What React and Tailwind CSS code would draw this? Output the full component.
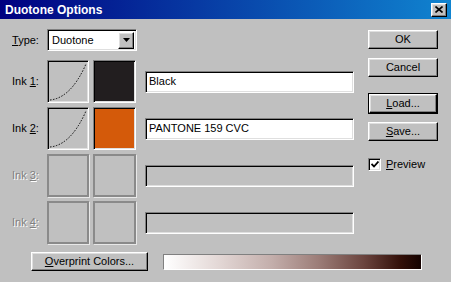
import React from 'react';

const raised =
  "bg-[#c0c0c0] border border-t-white border-l-white border-r-black border-b-black shadow-[inset_-1px_-1px_0_#808080,inset_1px_1px_0_#dfdfdf]";
const sunken =
  "border border-t-[#808080] border-l-[#808080] border-r-white border-b-white shadow-[inset_1px_1px_0_#000,inset_-1px_-1px_0_#dfdfdf]";

function U({ children }) {
  return <span className="underline underline-offset-[1px]">{children}</span>;
}

function Curve() {
  return (
    <svg width="38" height="39" viewBox="0 0 38 39" className="block">
      <path d="M1 38 Q 22 36 37 2" fill="none" stroke="#000" strokeWidth="1" strokeDasharray="1.5 1.5" />
    </svg>
  );
}

function InkRow({ n, color, name, enabled }) {
  return (
    <div className="flex items-center h-[43px]">
      <div
        className={`w-[35px] ${enabled ? "text-black" : "text-[#808080] [text-shadow:1px_1px_0_#fff]"}`}
      >
        Ink <U>{n}</U>:
      </div>
      {enabled ? (
        <>
          <div className={`w-[42px] h-[43px] ${sunken} bg-[#c0c0c0] flex items-center justify-center`}>
            <Curve />
          </div>
          <div className={`w-[43px] h-[43px] ml-[4px] ${sunken}`} style={{ background: color }} />
          <div className={`ml-[9px] w-[209px] h-[22px] ${sunken} bg-white flex items-center pl-[3px]`}>
            {name}
          </div>
        </>
      ) : (
        <>
          <div className="w-[42px] h-[43px] border-2 border-[#8a8a8a] shadow-[1px_1px_0_#e8e8e8]" />
          <div className="w-[43px] h-[43px] ml-[4px] border-2 border-[#8a8a8a] shadow-[1px_1px_0_#e8e8e8]" />
          <div className={`ml-[9px] w-[209px] h-[22px] ${sunken} bg-[#c0c0c0]`} />
        </>
      )}
    </div>
  );
}

function Btn({ children, className = "" }) {
  return (
    <div className={`w-[70px] h-[19px] ${raised} flex items-center justify-center ${className}`}>
      {children}
    </div>
  );
}

export default function App() {
  return (
    <div className="w-[451px] h-[282px] bg-[#c0c0c0] flex flex-col overflow-hidden font-['Liberation_Sans',Arial,sans-serif] text-[11px] text-black leading-none">
      {/* title bar */}
      <div className="h-[19px] flex items-center justify-between bg-[linear-gradient(to_right,#000080,#1084d0)] pl-[5px] pr-[4px]">
        <span className="text-white font-bold text-[12px]">Duotone Options</span>
        <div className={`w-[16px] h-[14px] ${raised} flex items-center justify-center`}>
          <svg width="8" height="7" viewBox="0 0 8 7">
            <path d="M0.5 0.5 L7.5 6.5 M7.5 0.5 L0.5 6.5" stroke="#000" strokeWidth="1.6" />
          </svg>
        </div>
      </div>

      <div className="flex">
        {/* left column */}
        <div className="w-[368px] pl-[12px] pt-[10px]">
          <div className="flex items-center h-[22px]">
            <div className="w-[35px]">
              <U>T</U>ype:
            </div>
            <div className={`w-[90px] h-[22px] ${sunken} bg-white flex items-center justify-between pl-[4px] pr-[2px]`}>
              <span>Duotone</span>
              <div className={`w-[16px] h-[17px] ${raised} flex items-center justify-center`}>
                <svg width="7" height="4" viewBox="0 0 7 4">
                  <path d="M0 0 H7 L3.5 4 Z" fill="#000" />
                </svg>
              </div>
            </div>
          </div>

          <div className="mt-[9px] flex flex-col gap-[4px]">
            <InkRow n="1" color="#221e1f" name="Black" enabled />
            <InkRow n="2" color="#d45a0a" name="PANTONE 159 CVC" enabled />
            <InkRow n="3" enabled={false} />
            <InkRow n="4" enabled={false} />
          </div>
        </div>

        {/* right column */}
        <div className="flex flex-col pt-[11px]">
          <Btn>OK</Btn>
          <Btn className="mt-[9px]">Cancel</Btn>
          <div className="mt-[16px] w-[70px] h-[21px] border border-black">
            <div className={`w-full h-full ${raised} flex items-center justify-center`}>
              <U>L</U>oad...
            </div>
          </div>
          <Btn className="mt-[8px]">
            <U>S</U>ave...
          </Btn>
          <div className="mt-[17px] flex items-center">
            <div className={`w-[13px] h-[13px] ${sunken} bg-white flex items-center justify-center`}>
              <svg width="8" height="7" viewBox="0 0 8 7">
                <path d="M0.5 3 L3 5.5 L7.5 0.5" fill="none" stroke="#000" strokeWidth="1.8" />
              </svg>
            </div>
            <span className="ml-[5px]">
              <U>P</U>review
            </span>
          </div>
        </div>
      </div>

      {/* bottom row */}
      <div className="mt-[8px] pl-[31px] flex items-center">
        <div className={`w-[117px] h-[19px] ${raised} flex items-center justify-center`}>
          <span>
            <U>O</U>verprint Colors...
          </span>
        </div>
        <div className="ml-[15px] w-[259px] h-[16px] border border-t-[#808080] border-l-[#808080] border-r-white border-b-white bg-[linear-gradient(to_right,#ffffff,#e2d6d4_22%,#c3aeab_42%,#9c7d78_60%,#6a433d_78%,#331009_92%,#140200)]" />
      </div>
    </div>
  );
}
